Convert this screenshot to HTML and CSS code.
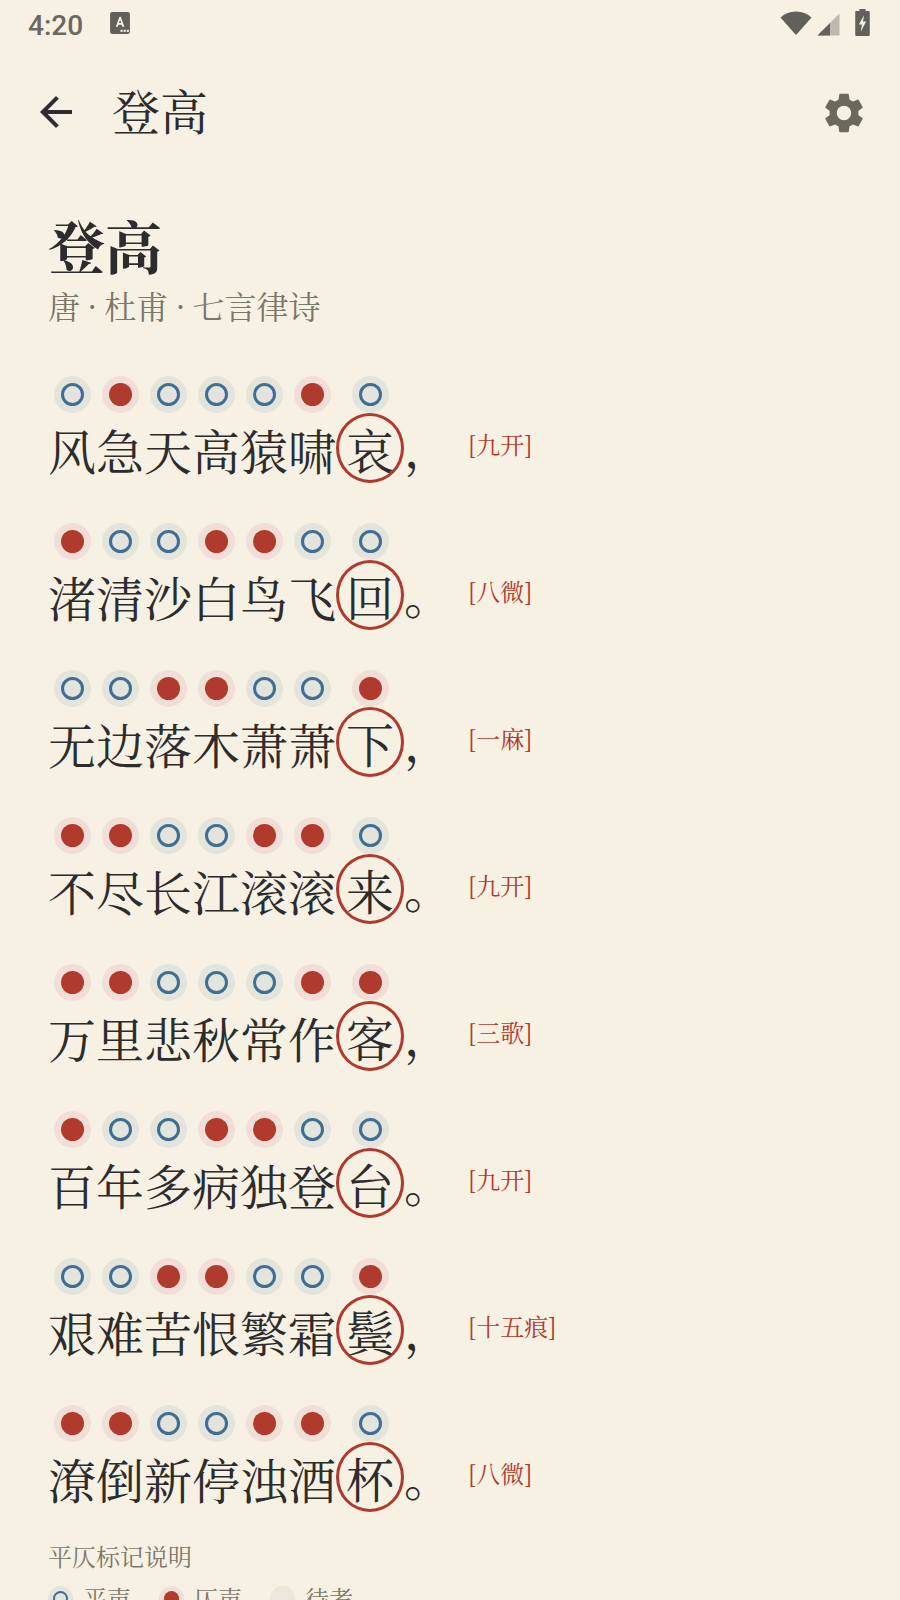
FILE: index.html
```html
<!DOCTYPE html>
<html lang="zh">
<head>
  <meta charset="UTF-8">
  <title>登高</title>
  <link rel="stylesheet" href="styles.css">
</head>
<body>
  <div class="status-bar">
    <span class="time">4:20</span>
    <svg class="ic-note" viewBox="0 0 19 22"><rect width="19" height="21" y="0" rx="2" fill="#62605a"/><path d="M5.500 14 9 4.500h1.200L13.700 14h-2l-.6-1.900H8l-.6 1.900zM8.500 10.500h2.100L9.600 7.300z" fill="#f7f1e3"/><rect x="10" y="17" width="2" height="2" fill="#f7f1e3"/><rect x="13" y="17" width="2" height="2" fill="#f7f1e3"/><rect x="16" y="17" width="2" height="2" fill="#f7f1e3"/></svg>
    <span class="spacer"></span>
    <svg class="ic-wifi" viewBox="0 0 32 25"><path d="M0.500 7.500C4.500 3.500 10 1.500 16 1.500s11.500 2 15.500 6L17 24a1.300 1.300 0 0 1-2 0z" fill="#62605a"/></svg>
    <svg class="ic-signal" viewBox="0 0 23 23"><path d="M22.500.500V22.500H.500z" fill="#bdb9ae"/><path d="M13 10V22.500H.500z" fill="#62605a"/></svg>
    <svg class="ic-batt" viewBox="0 0 14 26"><path d="M4 0h6v2h3a1 1 0 0 1 1 1v22a1 1 0 0 1-1 1H1a1 1 0 0 1-1-1V3a1 1 0 0 1 1-1h3z" fill="#62605a"/><path d="M8.500 6 3.500 15h3l-1.200 7 5.200-10H7.500z" fill="#f7f1e3"/></svg>
  </div>

  <div class="app-bar">
    <svg class="ic-back" viewBox="0 0 24 24"><path d="M20 11H7.830l5.590-5.590L12 4l-8 8 8 8 1.410-1.410L7.830 13H20v-2z"/></svg>
    <span class="bar-title">登高</span>
    <span class="spacer"></span>
    <svg class="ic-gear" viewBox="0 0 24 24"><path d="M19.140 12.940c.04-.3.06-.61.06-.94 0-.32-.02-.64-.07-.94l2.030-1.580c.18-.14.23-.41.12-.61l-1.920-3.320c-.12-.22-.37-.29-.59-.22l-2.390.96c-.5-.38-1.030-.7-1.620-.94l-.36-2.540c-.04-.24-.24-.41-.48-.41h-3.840c-.24 0-.43.17-.47.41l-.36 2.540c-.59.24-1.130.57-1.620.94l-2.390-.96c-.22-.08-.47 0-.59.22L2.740 8.870c-.12.21-.08.47.12.61l2.030 1.580c-.05.3-.09.63-.09.94s.02.64.07.94l-2.030 1.580c-.18.14-.23.41-.12.61l1.920 3.320c.12.22.37.29.59.22l2.390-.96c.5.38 1.030.7 1.620.94l.36 2.540c.05.24.24.41.48.41h3.840c.24 0 .44-.17.47-.41l.36-2.540c.59-.24 1.130-.56 1.620-.94l2.390.96c.22.08.47 0 .59-.22l1.920-3.320c.12-.22.07-.47-.12-.61l-2.010-1.580zM12 15.600c-1.980 0-3.600-1.620-3.600-3.600s1.620-3.600 3.600-3.600 3.600 1.620 3.600 3.600-1.620 3.600-3.600 3.600z"/></svg>
  </div>

  <div class="content">
    <h1 class="title">登高</h1>
    <div class="meta">唐 · 杜甫 · 七言律诗</div>

    <div class="poem" id="poem"></div>

    <div class="legend-title">平仄标记说明</div>
    <div class="legend">
      <span class="key"><i class="dot dot-small ping"></i>平声</span>
      <span class="key"><i class="dot dot-small ze"></i>仄声</span>
      <span class="key"><i class="dot dot-small tbd"></i>待考</span>
    </div>
  </div>

  <script>
    // 0 = 平, 1 = 仄
    const lines = [
      ['风急天高猿啸哀', '，', '[九开]', '0100 010'],
      ['渚清沙白鸟飞回', '。', '[八微]', '1001 100'],
      ['无边落木萧萧下', '，', '[一麻]', '0011 001'],
      ['不尽长江滚滚来', '。', '[九开]', '1100 110'],
      ['万里悲秋常作客', '，', '[三歌]', '1100 011'],
      ['百年多病独登台', '。', '[九开]', '1001 100'],
      ['艰难苦恨繁霜鬓', '，', '[十五痕]', '0011 001'],
      ['潦倒新停浊酒杯', '。', '[八微]', '1100 110']
    ];
    const poem = document.getElementById('poem');
    lines.forEach(([text, punct, rhyme, tones]) => {
      const flat = tones.replace(' ', '');
      let html = '<div class="line">';
      [...text].forEach((ch, i) => {
        const last = i === text.length - 1;
        const tone = flat[i] === '1' ? 'ze' : 'ping';
        html += `<div class="col${last ? ' col-rhyme' : ''}"><i class="dot ${tone}"></i><span class="ch">${ch}</span></div>`;
      });
      html += `<span class="punct">${punct}</span><span class="rhyme">${rhyme}</span></div>`;
      poem.insertAdjacentHTML('beforeend', html);
    });
  </script>
</body>
</html>
```

FILE: styles.css
```css
body {
  margin: 0;
  background-color: #f7f1e3;
  color: #2c2c2c;
  font-family: "Noto Serif CJK SC", "Liberation Serif", serif;
  overflow: hidden;
  height: 1600px;
}
svg {
  display: block;
  flex: none;
}
.spacer {
  flex: 1;
}
.status-bar {
  display: flex;
  align-items: center;
  height: 50px;
  padding: 0 30px 0 28px;
}
.time {
  font-family: Roboto, sans-serif;
  font-size: 28px;
  font-weight: 500;
  color: #6a6860;
  margin-right: 27px;
}
.ic-note {
  width: 20px;
  height: 23px;
  margin-bottom: 3px;
}
.ic-wifi {
  width: 32px;
  height: 25px;
  margin: 0 5px 5px 0;
}
.ic-signal {
  width: 23px;
  height: 23px;
  margin: 0 15px 1px 0;
}
.ic-batt {
  width: 15px;
  height: 27px;
  margin-bottom: 5px;
}
.app-bar {
  display: flex;
  align-items: center;
  height: 124px;
  padding: 0 32px;
}
.ic-back {
  width: 48px;
  height: 48px;
  fill: #2c2c2c;
}
.bar-title {
  font-size: 48px;
  margin: 0 0 6px 32px;
}
.ic-gear {
  width: 48px;
  height: 48px;
  fill: #6b685c;
  margin-top: 2px;
}
.content {
  padding: 32px 48px 0;
}
.title {
  font-size: 57px;
  font-weight: bold;
  line-height: 77px;
  margin: 0;
}
.meta {
  font-size: 32px;
  line-height: 44px;
  word-spacing: -1.3px;
  color: #7a7868;
}
.poem {
  margin-top: 49px;
}
.line {
  display: flex;
  align-items: flex-end;
  height: 107px;
  margin-bottom: 40px;
}
.col {
  display: flex;
  flex-direction: column;
  align-items: center;
  width: 48px;
}
.col-rhyme {
  width: 68px;
}
.dot {
  display: flex;
  align-items: center;
  justify-content: center;
  width: 37px;
  height: 37px;
  border-radius: 50%;
  flex: none;
}
.dot::after {
  content: "";
  box-sizing: border-box;
  width: 23px;
  height: 23px;
  border-radius: 50%;
}
.ping {
  background-color: #e3e4dc;
}
.ping::after {
  border: 3.5px solid #3e6e94;
}
.ze {
  background-color: #f1dfd7;
}
.ze::after {
  background-color: #b03a2e;
}
.ch {
  display: block;
  width: 48px;
  height: 70px;
  font-size: 48px;
  line-height: 73px;
  text-align: center;
}
.col-rhyme .ch {
  width: 68px;
  box-sizing: border-box;
  border: 3.5px solid #b03a2e;
  border-radius: 50%;
  line-height: 66px;
}
.punct {
  width: 48px;
  font-size: 48px;
  line-height: 73px;
}
.rhyme {
  font-size: 24px;
  line-height: 69px;
  margin: 0 0 5px 16px;
  color: #b03a2e;
}
.legend-title {
  font-size: 24px;
  line-height: 34px;
  color: #7a7868;
  margin-top: -13px;
}
.legend {
  display: flex;
  gap: 28px;
  margin-top: 8px;
}
.key {
  display: flex;
  align-items: center;
  gap: 10px;
  font-size: 24px;
  line-height: 34px;
  color: #7a7868;
}
.dot-small {
  width: 25px;
  height: 25px;
}
.dot-small::after {
  width: 15px;
  height: 15px;
}
.ping.dot-small::after {
  border-width: 2.5px;
}
.tbd {
  background-color: #ebe7dc;
}
```
